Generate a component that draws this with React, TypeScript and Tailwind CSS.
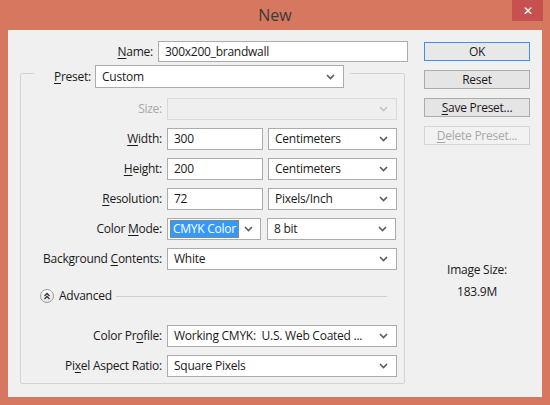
import React from 'react';

const Chevron = ({ disabled = false }: { disabled?: boolean }) => (
  <svg width="9" height="6" viewBox="0 0 9 6" className="shrink-0">
    <path d="M1 1 L4.5 4.5 L8 1" fill="none" stroke={disabled ? '#c4c4c4' : '#5b5b5b'} strokeWidth="1.6" />
  </svg>
);

const U = ({ children }: { children: React.ReactNode }) => <span className="underline underline-offset-2">{children}</span>;

const Select = ({ value, w, disabled = false, h = 'h-[22px]' }: { value?: string; w: string; disabled?: boolean; h?: string }) => (
  <div
    className={`${w} ${h} flex items-center justify-between pl-[6px] pr-[8px] border ${
      disabled ? 'border-[#d9d9d9] bg-[#efefef]' : 'border-[#acacac] bg-white'
    } text-[#1a1a1a]`}
  >
    <span className="whitespace-pre">{value}</span>
    <Chevron disabled={disabled} />
  </div>
);

const Input = ({ value, w }: { value: string; w: string }) => (
  <div className={`${w} h-[22px] flex items-center pl-[6px] border border-[#acacac] bg-white text-[#1a1a1a]`}>{value}</div>
);

const Row = ({ label, children, dim = false }: { label: React.ReactNode; children: React.ReactNode; dim?: boolean }) => (
  <div className="flex items-center h-[22px]">
    <div className={`w-[141px] text-right ${dim ? 'text-[#a8a8a8]' : 'text-[#1a1a1a]'}`}>{label}</div>
    <div className="ml-[5px] flex items-center gap-[5px]">{children}</div>
  </div>
);

const Button = ({ children, primary = false, disabled = false }: { children: React.ReactNode; primary?: boolean; disabled?: boolean }) => (
  <div
    className={`h-[19px] flex items-center justify-center border ${
      primary
        ? 'border-[#3c93e6] bg-[#e8e8e8] text-[#1a1a1a]'
        : disabled
          ? 'border-[#d6d6d6] bg-[#f2f2f2] text-[#a8a8a8]'
          : 'border-[#acacac] bg-[#e5e5e5] text-[#1a1a1a]'
    }`}
  >
    {children}
  </div>
);

export default function App() {
  return (
    <div className="w-[550px] h-[405px] bg-[#d6785f] flex flex-col font-['Open_Sans',sans-serif] text-[12px] tracking-[-0.25px] leading-none relative">
      {/* title bar */}
      <div className="h-[30px] flex items-center justify-center text-[16px] tracking-normal text-[#3a3a3a]">New</div>
      <div className="absolute right-[7px] top-0 w-[31px] h-[21px] bg-[#c75050] flex items-center justify-center text-white text-[12px]">
        ✕
      </div>

      {/* client area */}
      <div className="mx-[8px] h-[367px] bg-[#f0f0f0] flex pt-[11px]">
        <div className="w-[400px] pl-[12px] flex flex-col">
          <div className="flex items-center h-[21px]">
            <div className="w-[133px] text-right text-[#1a1a1a]">
              <U>N</U>ame:
            </div>
            <div className="ml-[5px] w-[250px] h-[21px] flex items-center pl-[6px] border border-[#acacac] bg-white text-[#1a1a1a]">
              300x200_brandwall
            </div>
          </div>

          {/* group box */}
          <div className="mt-[11px] w-[385px] border border-[#d3d3d3] rounded-[2px] flex flex-col pb-[6px]">
            <div className="-mt-[9px] ml-[13px] w-[316px] h-[23px] bg-[#f0f0f0] flex items-center pl-[20px]">
              <span className="text-[#1a1a1a]">
                <U>P</U>reset:
              </span>
              <div className="ml-auto mr-[6px]">
                <Select value="Custom" w="w-[249px]" h="h-[23px]" />
              </div>
            </div>

            <div className="mt-[10px] flex flex-col gap-[8px]">
              <Row label="Size:" dim>
                <Select w="w-[230px]" disabled />
              </Row>
              <Row label={<><U>W</U>idth:</>}>
                <Input value="300" w="w-[96px]" />
                <Select value="Centimeters" w="w-[129px]" />
              </Row>
              <Row label={<><U>H</U>eight:</>}>
                <Input value="200" w="w-[96px]" />
                <Select value="Centimeters" w="w-[129px]" />
              </Row>
              <Row label={<><U>R</U>esolution:</>}>
                <Input value="72" w="w-[96px]" />
                <Select value="Pixels/Inch" w="w-[129px]" />
              </Row>
              <Row label={<>Color <U>M</U>ode:</>}>
                <div className="w-[94px] h-[22px] flex items-center justify-between pl-[2px] pr-[7px] border border-[#acacac] bg-white">
                  <span className="h-[18px] px-[3px] flex items-center bg-[#3399ff] text-white outline-1 outline-dotted outline-[#c07a20] -outline-offset-1">
                    CMYK Color
                  </span>
                  <Chevron />
                </div>
                <div className="ml-[1px]">
                  <Select value="8 bit" w="w-[129px]" />
                </div>
              </Row>
              <Row label={<>Background <U>C</U>ontents:</>}>
                <Select value="White" w="w-[230px]" />
              </Row>
            </div>

            <div className="mt-[18px] h-[16px] flex items-center pl-[19px] pr-[17px]">
              <div className="w-[14px] h-[14px] rounded-full border border-[#9c9c9c] bg-gradient-to-b from-white to-[#e4e4e4] flex items-center justify-center">
                <svg width="8" height="8" viewBox="0 0 8 8">
                  <path d="M1.5 4 L4 1.5 L6.5 4 M1.5 7 L4 4.5 L6.5 7" fill="none" stroke="#333" strokeWidth="1.3" />
                </svg>
              </div>
              <span className="ml-[5px] text-[#1a1a1a]">Advanced</span>
              <div className="ml-[4px] flex-1 h-px bg-[#cfcfcf]" />
            </div>

            <div className="mt-[21px] flex flex-col gap-[8px]">
              <Row label={<>Color Pr<U>o</U>file:</>}>
                <Select value="Working CMYK:  U.S. Web Coated ..." w="w-[230px]" />
              </Row>
              <Row label={<>Pi<U>x</U>el Aspect Ratio:</>}>
                <Select value="Square Pixels" w="w-[230px]" />
              </Row>
            </div>
          </div>
        </div>

        {/* right column */}
        <div className="ml-[16px] w-[106px] flex flex-col">
          <div className="flex flex-col gap-[9px] mt-[1px]">
            <Button primary>OK</Button>
            <Button>Reset</Button>
            <Button>
              <span>
                <U>S</U>ave Preset...
              </span>
            </Button>
            <Button disabled>
              <span>
                <U>D</U>elete Preset...
              </span>
            </Button>
          </div>
          <div className="mt-[119px] flex flex-col items-center text-[#1a1a1a]">
            <span>Image Size:</span>
            <span className="mt-[10px]">183.9M</span>
          </div>
        </div>
      </div>
    </div>
  );
}
